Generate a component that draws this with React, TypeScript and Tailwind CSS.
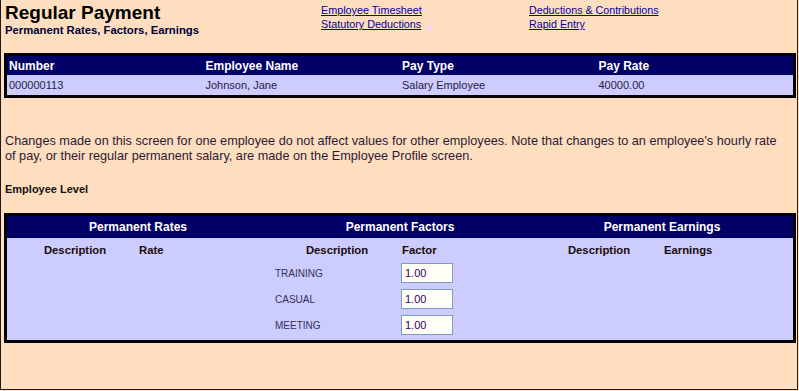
import React from "react";

const font = "font-['Liberation_Sans',Arial,sans-serif]";

export default function App() {
  const factors = ["TRAINING", "CASUAL", "MEETING"];
  return (
    <div className={`w-[799px] h-[391px] bg-[#FFDEC0] ${font}`}>
      <div className="w-[798px] h-[390px] border-l border-r border-b border-[#1a1a1a] flex flex-col">
        {/* Header */}
        <div className="flex pl-[4px] pt-[1px]">
          <div className="w-[316px] flex flex-col">
            <div className="text-[19px] leading-[23px] font-bold text-black">Regular Payment</div>
            <div className="text-[11.3px] leading-[13px] font-bold text-[#000033]">
              Permanent Rates, Factors, Earnings
            </div>
          </div>
          <div className="w-[208px] flex flex-col pt-[2px] text-[10.8px] leading-[14px]">
            <a className="underline text-[#000099] self-start">Employee Timesheet</a>
            <a className="underline text-[#000099] self-start">Statutory Deductions</a>
          </div>
          <div className="flex flex-col pt-[2px] text-[10.7px] leading-[14px]">
            <a className="underline text-[#000099] self-start">Deductions &amp; Contributions</a>
            <a className="underline text-[#000099] self-start">Rapid Entry</a>
          </div>
        </div>

        {/* Employee table */}
        <div className="ml-[3px] mt-[16px] w-[792px] border-[3px] border-black">
          <div className="grid grid-cols-4 bg-[#000066] h-[19px] items-center text-white font-bold text-[12px]">
            <div className="px-[2px]">Number</div>
            <div className="px-[2px]">Employee Name</div>
            <div className="px-[2px]">Pay Type</div>
            <div className="px-[2px]">Pay Rate</div>
          </div>
          <div className="grid grid-cols-4 bg-[#CCCCFF] h-[20px] items-center text-[#222244] text-[11px]">
            <div className="px-[2px]">000000113</div>
            <div className="px-[2px]">Johnson, Jane</div>
            <div className="px-[2px]">Salary Employee</div>
            <div className="px-[2px]">40000.00</div>
          </div>
        </div>

        {/* Paragraph */}
        <div className="pl-[4px] mt-[36px] text-[12.7px] leading-[15px] text-[#2a1a33]">
          <div className="whitespace-nowrap">
            Changes made on this screen for one employee do not affect values for other employees. Note that changes to an employee's hourly rate
          </div>
          <div className="whitespace-nowrap">
            of pay, or their regular permanent salary, are made on the Employee Profile screen.
          </div>
        </div>

        <div className="pl-[4px] mt-[19px] text-[11px] leading-[13px] font-bold text-[#111]">Employee Level</div>

        {/* Permanent table */}
        <div className="ml-[3px] mt-[17px] w-[792px] border-[3px] border-black bg-[#CCCCFF]">
          <div className="grid grid-cols-3 bg-[#000066] h-[22px] items-center text-white font-bold text-[12px] text-center">
            <div>Permanent Rates</div>
            <div>Permanent Factors</div>
            <div>Permanent Earnings</div>
          </div>
          <div className="grid grid-cols-3 items-start">
            {/* Rates */}
            <div className="pl-[6px]">
              <div className="flex h-[24px] items-center text-[11.3px] font-bold text-[#1a0a0a]">
                <div className="w-[124px] text-center">Description</div>
                <div className="pl-[2px]">Rate</div>
              </div>
            </div>
            {/* Factors */}
            <div className="pl-[6px]">
              <div className="flex h-[24px] items-center text-[11.3px] font-bold text-[#1a0a0a]">
                <div className="w-[124px] text-center">Description</div>
                <div className="pl-[3px]">Factor</div>
              </div>
              {factors.map((f) => (
                <div key={f} className="flex h-[26px] items-start pt-[1px]">
                  <div className="w-[124px] h-[20px] flex items-center text-[10px] text-[#333355]">{f}</div>
                  <div className="pl-[2px]">
                    <input
                      readOnly
                      defaultValue="1.00"
                      className={`block w-[52px] h-[20px] border border-[#7F9DB9] bg-[#FFFFF7] px-[3px] text-[11px] text-[#330066] outline-none ${font}`}
                    />
                  </div>
                </div>
              ))}
            </div>
            {/* Earnings */}
            <div className="pl-[6px]">
              <div className="flex h-[24px] items-center text-[11.3px] font-bold text-[#1a0a0a]">
                <div className="w-[124px] text-center">Description</div>
                <div className="pl-[3px]">Earnings</div>
              </div>
            </div>
          </div>
        </div>
      </div>
    </div>
  );
}
